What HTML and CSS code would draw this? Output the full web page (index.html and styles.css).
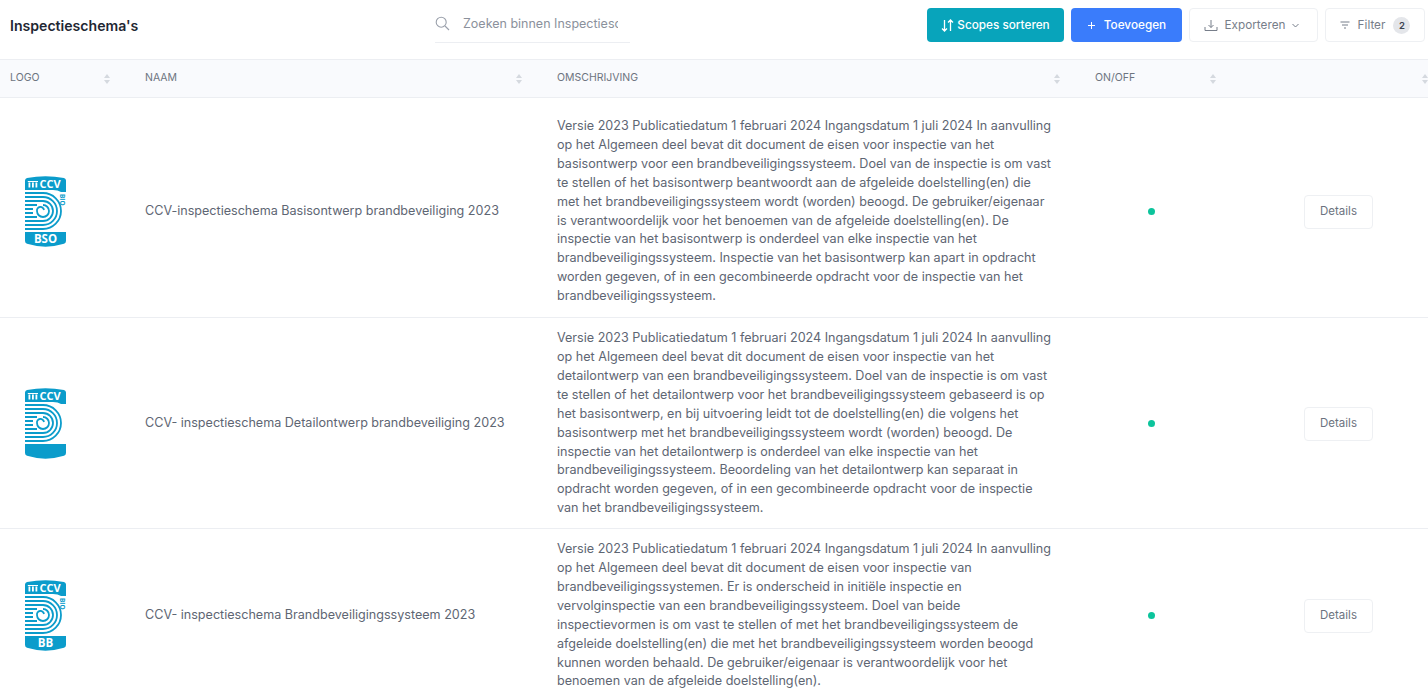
FILE: index.html
```html
<!DOCTYPE html>
<html lang="nl">
<head>
  <meta charset="UTF-8">
  <title>Inspectieschema's</title>
  <link rel="stylesheet" href="styles.css">
</head>
<body>

  <svg class="defs" width="0" height="0">
    <symbol id="ccv-logo" viewBox="0 0 41 71">
      <path fill="#0b9ccb" d="M0 14V4.500Q0 2.500 2 2 20.500 -1.500 39 2 41 2.500 41 4.500V16H36Q33 14 28 14Z"/>
      <g fill="none" stroke="#0b9ccb" stroke-width="1.800">
        <path d="M0 17H18A18 18 0 0 1 18 53H0"/>
        <path d="M0 21H18A14 14 0 0 1 18 49H0"/>
        <path d="M0 25H18A10 10 0 0 1 18 45H0"/>
        <path d="M18 29A6 6 0 1 1 12 35A3.500 3.500 0 0 1 19 34"/>
        <path d="M0 29H12M0 33H8M0 37H8M0 41H12"/>
      </g>
      <path fill="#0b9ccb" d="M0 56H41V65Q41 67 39 67.800 20.500 73.500 2 67.800 0 67 0 65Z"/>
      <g fill="#fff">
        <rect x="3.500" y="6.500" width="1.800" height="5"/>
        <rect x="7" y="6.500" width="1.800" height="5"/>
        <rect x="10.500" y="6.500" width="1.800" height="5"/>
        <rect x="2.800" y="5" width="10.200" height="1"/>
      </g>
    </symbol>
  </svg>

  <header class="toolbar">
    <h1 class="page-title">Inspectieschema's</h1>
    <label class="search">
      <svg class="search-icon" width="15" height="15" viewBox="0 0 15 15"><circle cx="6.200" cy="6.200" r="5"/><path d="M10 10l4 4"/></svg>
      <input class="search-input" type="text" placeholder="Zoeken binnen Inspectieschema's">
    </label>
    <div class="actions">
      <button class="btn btn-teal">
        <svg width="13" height="13" viewBox="0 0 13 13"><path d="M3.500 1v11M1 9.500l2.500 2.500L6 9.500M9.500 12V1M7 3.500L9.500 1 12 3.500"/></svg>
        Scopes sorteren
      </button>
      <button class="btn btn-blue">
        <svg width="9" height="9" viewBox="0 0 9 9"><path d="M4.500 1v7M1 4.500h7"/></svg>
        Toevoegen
      </button>
      <button class="btn btn-light btn-export">
        <svg width="14" height="13" viewBox="0 0 14 13"><path d="M7 1v7.500M4.500 6L7 8.500 9.500 6M1 8v3.500h12V8"/></svg>
        Exporteren
        <svg class="chevron" width="7" height="5" viewBox="0 0 7 5"><path d="M.5 1l3 3 3-3"/></svg>
      </button>
      <button class="btn btn-light btn-filter">
        <svg width="10" height="8" viewBox="0 0 10 8"><path d="M.5 1h9M2 4h6M4 7h2"/></svg>
        Filter
        <span class="count">2</span>
      </button>
    </div>
  </header>

  <main class="schema-table">
    <div class="row head">
      <div class="th">Logo<span class="sort"></span></div>
      <div class="th">Naam<span class="sort"></span></div>
      <div class="th">Omschrijving<span class="sort"></span></div>
      <div class="th">On/Off<span class="sort"></span></div>
      <div class="th"><span class="sort"></span></div>
    </div>

    <div class="row item first">
      <div class="td td-logo">
        <svg class="logo" viewBox="0 0 41 71">
          <use href="#ccv-logo"/>
          <text class="logo-ccv" x="14.500" y="11.500">CCV</text>
          <text class="logo-bio" transform="translate(35 18) rotate(90)">BIO</text>
          <text class="logo-label" x="20.500" y="67">BSO</text>
        </svg>
      </div>
      <div class="td">CCV-inspectieschema Basisontwerp brandbeveiliging 2023</div>
      <div class="td td-text">Versie 2023 Publicatiedatum 1 februari 2024 Ingangsdatum 1 juli 2024 In aanvulling op het Algemeen deel bevat dit document de eisen voor inspectie van het basisontwerp voor een brandbeveiligingssysteem. Doel van de inspectie is om vast te stellen of het basisontwerp beantwoordt aan de afgeleide doelstelling(en) die met het brandbeveiligingssysteem wordt (worden) beoogd. De gebruiker/eigenaar is verantwoordelijk voor het benoemen van de afgeleide doelstelling(en). De inspectie van het basisontwerp is onderdeel van elke inspectie van het brandbeveiligingssysteem. Inspectie van het basisontwerp kan apart in opdracht worden gegeven, of in een gecombineerde opdracht voor de inspectie van het brandbeveiligingssysteem.</div>
      <div class="td td-status"><span class="dot"></span></div>
      <div class="td td-action"><button class="btn-details">Details</button></div>
    </div>

    <div class="row item">
      <div class="td td-logo">
        <svg class="logo" viewBox="0 0 41 71">
          <use href="#ccv-logo"/>
          <text class="logo-ccv" x="14.500" y="11.500">CCV</text>
        </svg>
      </div>
      <div class="td">CCV- inspectieschema Detailontwerp brandbeveiliging 2023</div>
      <div class="td td-text">Versie 2023 Publicatiedatum 1 februari 2024 Ingangsdatum 1 juli 2024 In aanvulling op het Algemeen deel bevat dit document de eisen voor inspectie van het detailontwerp van een brandbeveiligingssysteem. Doel van de inspectie is om vast te stellen of het detailontwerp voor het brandbeveiligingssysteem gebaseerd is op het basisontwerp, en bij uitvoering leidt tot de doelstelling(en) die volgens het basisontwerp met het brandbeveiligingssysteem wordt (worden) beoogd. De inspectie van het detailontwerp is onderdeel van elke inspectie van het brandbeveiligingssysteem. Beoordeling van het detailontwerp kan separaat in opdracht worden gegeven, of in een gecombineerde opdracht voor de inspectie van het brandbeveiligingssysteem.</div>
      <div class="td td-status"><span class="dot"></span></div>
      <div class="td td-action"><button class="btn-details">Details</button></div>
    </div>

    <div class="row item">
      <div class="td td-logo">
        <svg class="logo" viewBox="0 0 41 71">
          <use href="#ccv-logo"/>
          <text class="logo-ccv" x="14.500" y="11.500">CCV</text>
          <text class="logo-bio" transform="translate(35 18) rotate(90)">BIO</text>
          <text class="logo-label" x="20.500" y="67">BB</text>
        </svg>
      </div>
      <div class="td">CCV- inspectieschema Brandbeveiligingssysteem 2023</div>
      <div class="td td-text">Versie 2023 Publicatiedatum 1 februari 2024 Ingangsdatum 1 juli 2024 In aanvulling op het Algemeen deel bevat dit document de eisen voor inspectie van brandbeveiligingssystemen. Er is onderscheid in initiële inspectie en vervolginspectie van een brandbeveiligingssysteem. Doel van beide inspectievormen is om vast te stellen of met het brandbeveiligingssysteem de afgeleide doelstelling(en) die met het brandbeveiligingssysteem worden beoogd kunnen worden behaald. De gebruiker/eigenaar is verantwoordelijk voor het benoemen van de afgeleide doelstelling(en).</div>
      <div class="td td-status"><span class="dot"></span></div>
      <div class="td td-action"><button class="btn-details">Details</button></div>
    </div>
  </main>

</body>
</html>
```

FILE: styles.css
```css
* {
  box-sizing: border-box;
}

html, body {
  height: 100%;
  overflow: hidden;
}

body {
  margin: 0;
  background-color: #fff;
  color: #5e6673;
  font-family: Inter, "Noto Sans", sans-serif;
  font-size: 12.58px;
}

.defs {
  display: block;
  height: 0;
}

/* toolbar */

.toolbar {
  display: flex;
  align-items: flex-start;
  height: 59px;
  padding: 8px 3px 0 10px;
}

.page-title {
  width: 425px;
  margin: 9px 0 0;
  color: #1f2733;
  font-size: 14.100px;
  font-weight: 600;
}

.search {
  display: flex;
  align-items: center;
  width: 195px;
  height: 36px;
  margin-top: -1px;
  border-bottom: 1px solid #eceef2;
}

.search-icon {
  flex: none;
  margin: 0 13px 3px 0;
  fill: none;
  stroke: #9aa0ab;
  stroke-width: 1.100;
}

.search-input {
  width: 155px;
  padding: 0;
  margin-bottom: 2px;
  border: 0;
  outline: 0;
  color: #5e6673;
  font-family: inherit;
  font-size: 12.500px;
}

.search-input::placeholder {
  color: #8b919c;
  opacity: 1;
}

.actions {
  display: flex;
  gap: 7px;
  margin-left: auto;
}

.btn {
  display: flex;
  align-items: center;
  justify-content: center;
  height: 34px;
  border: 1px solid transparent;
  border-radius: 4px;
  font-family: inherit;
  font-size: 11.750px;
  font-weight: 500;
}

.btn svg {
  fill: none;
  stroke: currentColor;
  stroke-width: 1;
}

.btn-teal {
  gap: 3px;
  width: 137px;
  background-color: #08a4bb;
  color: #fff;
}

.btn-teal svg {
  stroke-width: 1.300;
}

.btn-blue {
  gap: 8px;
  width: 111px;
  padding-left: 6px;
  background-color: #3a7cfb;
  color: #fff;
}

.btn-light {
  border-color: #eef0f3;
  background-color: #fff;
  color: #777e8a;
  font-weight: 400;
}

.btn-export {
  gap: 7px;
  width: 129px;
  padding-right: 10px;
}

.btn-filter {
  gap: 8px;
  width: 100px;
}

.count {
  width: 17px;
  height: 17px;
  border-radius: 50%;
  background-color: #e4e6ea;
  color: #3c4450;
  font-size: 9.500px;
  font-weight: 600;
  line-height: 17px;
  text-align: center;
}

/* table */

.schema-table {
  width: 1453px;
}

.row {
  display: grid;
  grid-template-columns: 135px 412px 538px 156px 212px;
}

.head {
  height: 39px;
  align-items: center;
  padding-bottom: 2px;
  border-top: 1px solid #eceef2;
  border-bottom: 1px solid #eceef2;
  background-color: #f9fafd;
}

.th {
  position: relative;
  padding-left: 10px;
  color: #6d7480;
  font-size: 10.500px;
  text-transform: uppercase;
}

.sort {
  position: absolute;
  top: 50%;
  right: 24px;
  width: 7px;
  height: 10px;
  margin-top: -4px;
}

.sort::before,
.sort::after {
  content: "";
  position: absolute;
  left: 0;
  border-left: 3.500px solid transparent;
  border-right: 3.500px solid transparent;
}

.sort::before {
  top: 0;
  border-bottom: 4px solid #d5d9df;
}

.sort::after {
  bottom: 0;
  border-top: 4px solid #d5d9df;
}

.item {
  align-items: center;
  padding: 11px 0 10px;
  border-bottom: 1px solid #eceef2;
  line-height: 18.900px;
}

.item.first {
  padding: 19px 0 11px;
}

.td {
  padding: 0 10px;
}

.td-text {
  padding-right: 32px;
}

.td-logo {
  padding: 0 0 0 25px;
}

.logo {
  display: block;
  width: 41px;
  height: 71px;
}

.logo-ccv {
  fill: #fff;
  font-family: "Open Sans", sans-serif;
  font-size: 11px;
  font-weight: 700;
}

.logo-bio {
  fill: #0b9ccb;
  font-family: "Open Sans", sans-serif;
  font-size: 6.500px;
  font-weight: 700;
}

.logo-label {
  fill: #fff;
  font-family: "Open Sans", sans-serif;
  font-size: 11.500px;
  font-weight: 700;
  text-anchor: middle;
}

.td-status {
  padding-left: 63px;
}

.dot {
  display: block;
  width: 7px;
  height: 7px;
  border-radius: 50%;
  background-color: #0cc49c;
}

.td-action {
  padding-left: 63px;
}

.btn-details {
  width: 69px;
  height: 34px;
  padding-bottom: 3px;
  border: 1px solid #eef0f3;
  border-radius: 4px;
  background-color: #fff;
  color: #6c7380;
  font-family: inherit;
  font-size: 11.500px;
}
```
